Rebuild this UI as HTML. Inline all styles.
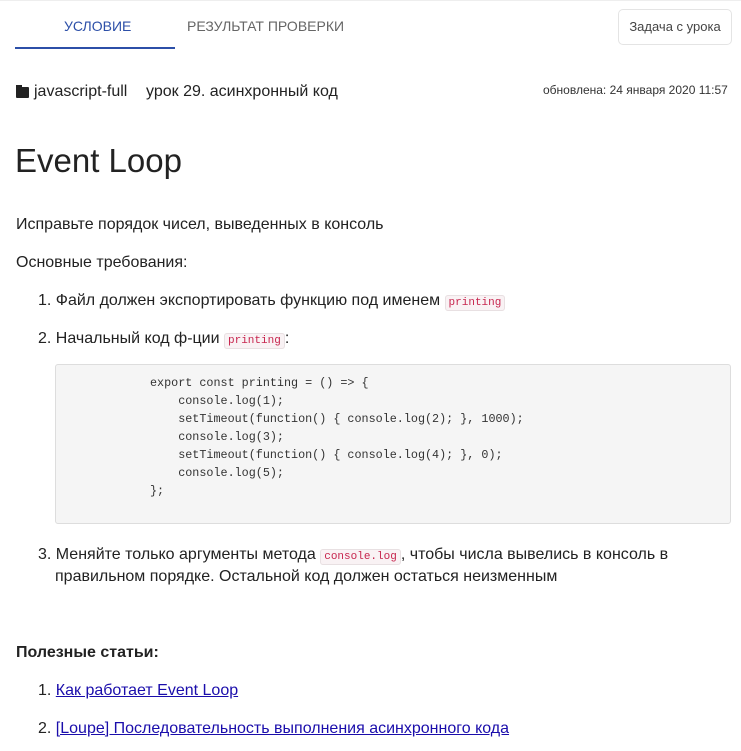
<!DOCTYPE html>
<html><head><meta charset="utf-8"><style>
body{margin:0;width:741px;height:751px;background:#fff;font-family:"Liberation Sans",sans-serif;color:#222;position:relative;overflow:hidden}
.a{position:absolute;white-space:nowrap}
.t{font-size:16px;line-height:22px}
code{font-family:"Liberation Mono",monospace;font-size:11px;color:#c7254e;background:#f9f2f4;border:1px solid #e8e0e2;border-radius:3px;padding:1px 3px}
pre{position:absolute;left:55px;top:364px;width:676px;height:160px;margin:0;background:#f5f5f5;border:1px solid #ddd;border-radius:3px;box-sizing:border-box;font-family:"Liberation Mono",monospace;font-size:11.75px;line-height:18px;color:#333;padding:9px 0 0 94px}
a{color:#1a0dab}
</style></head><body>
<div class="a" style="left:0;top:0;width:741px;height:1px;background:#eee"></div>
<div class="a" style="left:64px;top:18px;font-size:14px;color:#2c4fa8">УСЛОВИЕ</div>
<div class="a" style="left:187px;top:18px;font-size:14px;color:#666">РЕЗУЛЬТАТ ПРОВЕРКИ</div>
<div class="a" style="left:15px;top:47px;width:160px;height:2px;background:#2c4fa8"></div>
<div class="a" style="left:618px;top:9px;width:112px;height:34px;border:1px solid #e4e4e4;border-radius:5px;font-size:13px;line-height:34px;text-align:center;color:#444">Задача с урока</div>
<div class="a" style="left:16px;top:87px;width:13px;height:11px;background:#222;border-radius:1px"></div>
<div class="a" style="left:16px;top:85px;width:6px;height:3px;background:#222"></div>
<div class="a t" style="left:34px;top:81px">javascript-full</div>
<div class="a t" style="left:146px;top:81px">урок 29. асинхронный код</div>
<div class="a" style="left:543px;top:83px;font-size:12px;color:#333">обновлена: 24 января 2020 11:57</div>
<div class="a" style="left:15px;top:142px;font-size:33px;color:#222">Event Loop</div>
<div class="a t" style="left:16px;top:214px">Исправьте порядок чисел, выведенных в консоль</div>
<div class="a t" style="left:16px;top:252px">Основные требования:</div>
<div class="a t" style="left:38px;top:290px">1. Файл должен экспортировать функцию под именем <code>printing</code></div>
<div class="a t" style="left:38px;top:328px">2. Начальный код ф-ции <code>printing</code>:</div>
<pre>export const printing = () =&gt; {
    console.log(1);
    setTimeout(function() { console.log(2); }, 1000);
    console.log(3);
    setTimeout(function() { console.log(4); }, 0);
    console.log(5);
};</pre>
<div class="a t" style="left:38px;top:544px">3. Меняйте только аргументы метода <code>console.log</code>, чтобы числа вывелись в консоль в</div>
<div class="a t" style="left:55px;top:566px">правильном порядке. Остальной код должен остаться неизменным</div>
<div class="a t" style="left:16px;top:642px;font-weight:bold">Полезные статьи:</div>
<div class="a t" style="left:38px;top:680px">1. <a href="#">Как работает Event Loop</a></div>
<div class="a t" style="left:38px;top:718px">2. <a href="#">[Loupe] Последовательность выполнения асинхронного кода</a></div>
</body></html>
